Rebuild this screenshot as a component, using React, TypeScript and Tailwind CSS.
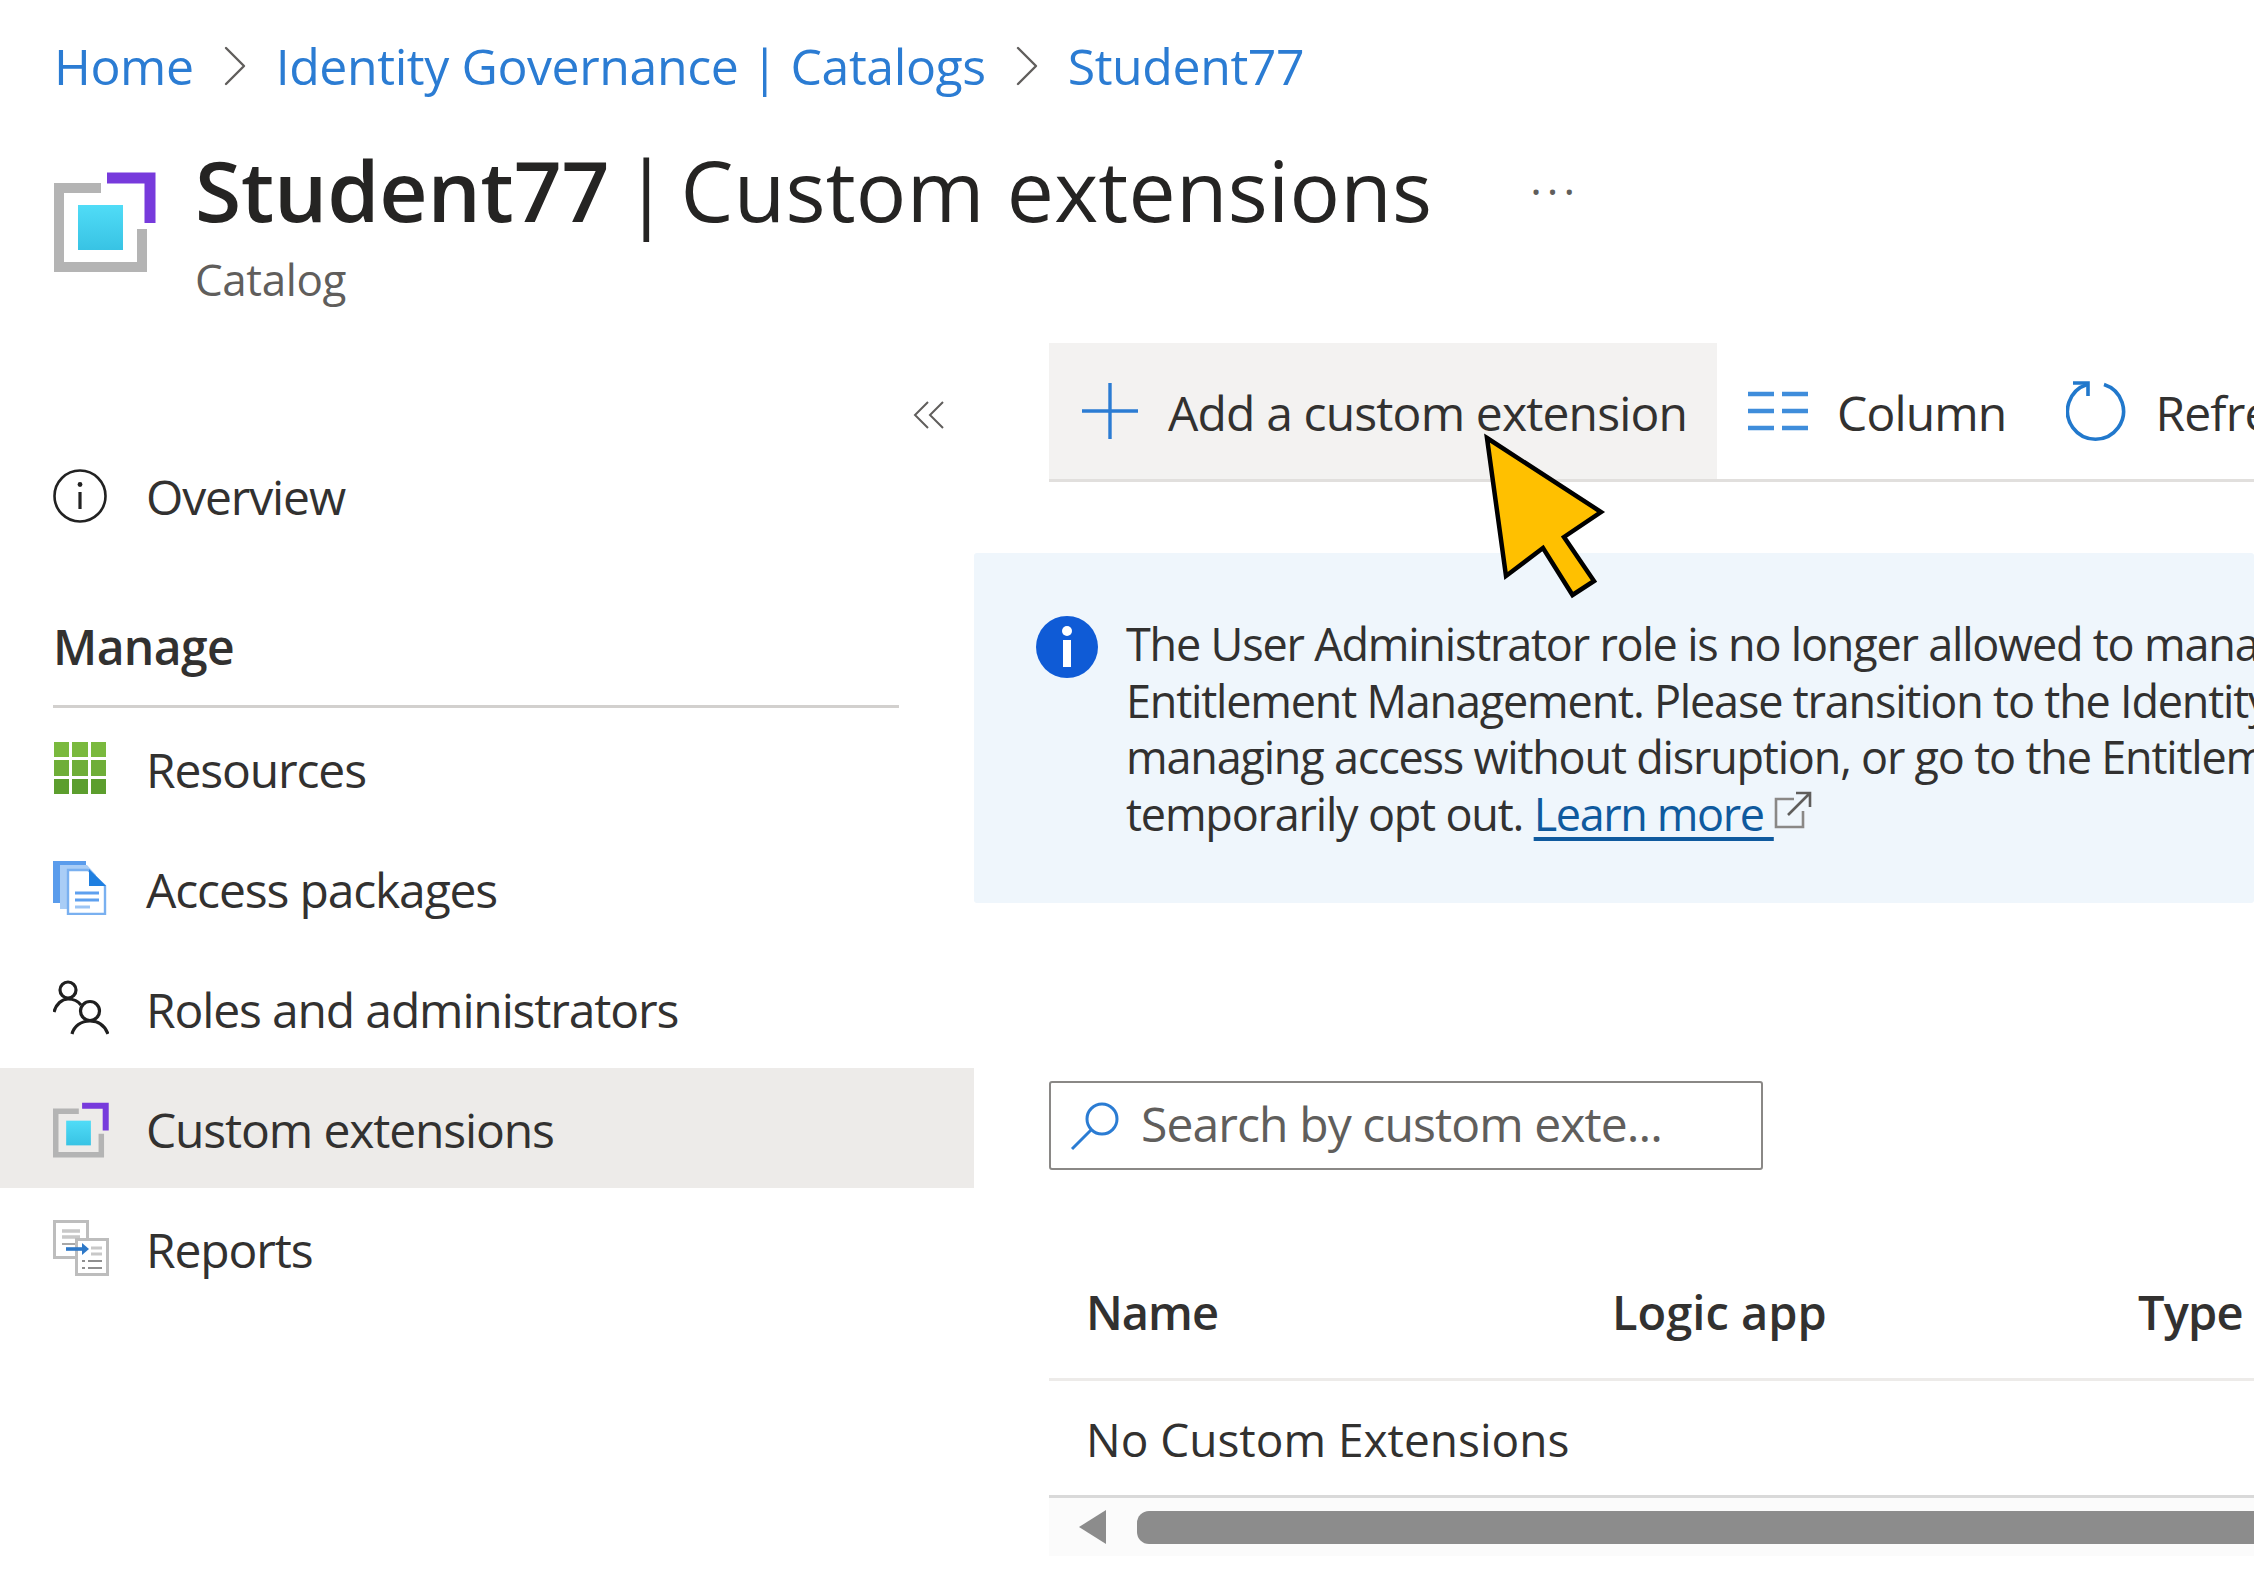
import React from 'react';
import { ChevronRight } from 'lucide-react';

const font = "font-['Open_Sans','Noto_Sans',sans-serif]";

function CatalogIcon({ className }: { className: string }) {
  return (
    <svg viewBox="0 0 102 100" className={className} fill="none">
      <defs>
        <linearGradient id="cyan" x1="0" y1="0" x2="0" y2="1">
          <stop offset="0" stopColor="#50dcf7" />
          <stop offset="1" stopColor="#38c3e4" />
        </linearGradient>
      </defs>
      <path d="M47 16H5V95H88V57" stroke="#b4b4b4" strokeWidth="10" />
      <path d="M53 6H96V51" stroke="#773adc" strokeWidth="11" />
      <rect x="24" y="33" width="45" height="45" fill="url(#cyan)" />
    </svg>
  );
}

function OverviewIcon() {
  return (
    <svg viewBox="0 0 54 54" className="w-[54px] h-[54px] mt-[2px]" fill="none" stroke="#222">
      <circle cx="27" cy="27" r="25.5" strokeWidth="2.6" />
      <circle cx="27" cy="15.5" r="2.4" fill="#222" stroke="none" />
      <path d="M27 23V40" strokeWidth="3.2" />
    </svg>
  );
}

function ResourcesIcon() {
  const cells = [0, 1, 2, 3, 4, 5, 6, 7, 8];
  return (
    <div className="w-[54px] h-[54px] grid grid-cols-3 gap-[3px] p-[1px]">
      {cells.map((c) => (
        <div key={c} className={c < 3 ? 'bg-[#7ab93e]' : c < 6 ? 'bg-[#6fae38]' : 'bg-[#5c9e2e]'} />
      ))}
    </div>
  );
}

function PackagesIcon() {
  return (
    <svg viewBox="0 0 54 54" className="w-[54px] h-[54px]">
      <path d="M0 0H33V42H0Z" fill="#5a9cec" />
      <path d="M7 4H34L43 14V48H7Z" fill="#a9cdf6" />
      <path d="M15 9H35L52 25V53H15Z" fill="#fff" stroke="#79b0f0" strokeWidth="2.4" />
      <path d="M36 8L53 25H36Z" fill="#1f7fe0" />
      <path d="M22 32H46M22 39H46" stroke="#5ea0ef" strokeWidth="3" />
      <path d="M22 46H37" stroke="#9cc5f5" strokeWidth="3" />
    </svg>
  );
}

function RolesIcon() {
  return (
    <svg viewBox="0 0 56 56" className="w-[56px] h-[56px]" fill="none" stroke="#1f1f1f" strokeWidth="3.2">
      <circle cx="15" cy="10" r="8" />
      <path d="M1 32C3 24 9 19 15 19C21 19 25 21 28 25" />
      <circle cx="37" cy="31" r="9.5" />
      <path d="M19 54C21 46 28 41 37 41C46 41 52 46 55 54" />
    </svg>
  );
}

function ReportsIcon() {
  return (
    <svg viewBox="0 0 56 56" className="w-[56px] h-[56px]">
      <rect x="1.5" y="1.5" width="33" height="36" fill="#fff" stroke="#bdbdbd" strokeWidth="3" />
      <path d="M9 11H27M9 17H27" stroke="#c8c8c8" strokeWidth="3.4" />
      <path d="M9 24H22" stroke="#a8a8a8" strokeWidth="2" />
      <rect x="23.5" y="19.5" width="31" height="35" fill="#fff" stroke="#bdbdbd" strokeWidth="3" />
      <path d="M38 28H49M38 34H49" stroke="#c8c8c8" strokeWidth="3" />
      <path d="M29 41H49M29 48H49" stroke="#8f8f8f" strokeWidth="2" strokeDasharray="3 3 16" />
      <path d="M13 29H32" stroke="#2d78c8" strokeWidth="3.6" />
      <path d="M29 23L36 29L29 35Z" fill="#2d78c8" />
    </svg>
  );
}

function NavRow({ icon, label, active }: { icon: React.ReactNode; label: string; active?: boolean }) {
  return (
    <div className={`h-[120px] flex items-center pl-[53px] ${active ? 'bg-[#edebe9]' : ''}`}>
      <div className="w-[93px] shrink-0">{icon}</div>
      <span className="text-[48px] text-[#323130] tracking-[-1.15px] leading-none pt-[3px]">{label}</span>
    </div>
  );
}

function ToolbarItem({ icon, label, className }: { icon: React.ReactNode; label: string; className: string }) {
  return (
    <div className={`h-[136px] flex items-center shrink-0 ${className}`}>
      {icon}
      <span className="text-[48px] text-[#323130] tracking-[-0.85px] leading-none whitespace-nowrap pt-[4px]">{label}</span>
    </div>
  );
}

export default function App() {
  return (
    <div className={`${font} relative w-[2254px] h-[1595px] overflow-hidden bg-white`}>
      {/* Breadcrumb */}
      <div className="h-[132px] pl-[54px] flex items-center text-[50px] text-[#2b7cd3] tracking-[-0.42px] leading-none">
        <span>Home</span>
        <ChevronRight className="w-[72px] h-[72px] mx-[5px] text-[#605e5c]" strokeWidth={0.8} />
        <span>Identity Governance | Catalogs</span>
        <ChevronRight className="w-[72px] h-[72px] mx-[5px] text-[#605e5c]" strokeWidth={0.8} />
        <span>Student77</span>
      </div>

      {/* Title */}
      <div className="h-[211px] flex pl-[54px]">
        <CatalogIcon className="w-[102px] h-[100px] mt-[40px] shrink-0" />
        <div className="ml-[39px] flex flex-col">
          <div className="flex items-center h-[116px] text-[84px] text-[#252423] leading-none whitespace-nowrap">
            <span className="font-semibold tracking-[-0.2px]">Student77</span>
            <span className="ml-[14px]">|</span>
            <span className="ml-[11px] tracking-[0.25px]">Custom extensions</span>
            <span className="ml-[98px] text-[#605e5c] text-[44px] tracking-[5px] pb-[24px]">...</span>
          </div>
          <span className="text-[44px] text-[#605e5c] tracking-[-0.4px] leading-none mt-[9px]">Catalog</span>
        </div>
      </div>

      <div className="flex">
        {/* Sidebar */}
        <div className="w-[974px] shrink-0">
          <div className="h-[92px] flex justify-end items-center pr-[29px] pt-[52px]">
            <svg viewBox="0 0 32 32" className="w-[32px] h-[32px]" fill="none" stroke="#605e5c" strokeWidth="2">
              <path d="M15 3L2 16L15 29M30 3L17 16L30 29" />
            </svg>
          </div>
          <NavRow icon={<OverviewIcon />} label="Overview" />
          <div className="mx-[53px] w-[846px] h-[153px] flex items-end pb-[34px] border-b-[3px] border-[#d2d0ce]">
            <span className="text-[48px] font-semibold text-[#323130] tracking-[-0.6px] leading-none">Manage</span>
          </div>
          <NavRow icon={<ResourcesIcon />} label="Resources" />
          <NavRow icon={<PackagesIcon />} label="Access packages" />
          <NavRow icon={<RolesIcon />} label="Roles and administrators" />
          <NavRow icon={<CatalogIcon className="w-[56px] h-[56px] mt-[3px]" />} label="Custom extensions" active />
          <NavRow icon={<ReportsIcon />} label="Reports" />
        </div>

        {/* Content */}
        <div className="flex-1 min-w-0">
          <div className="ml-[75px] flex border-b-[3px] border-[#e1dfdd] overflow-hidden">
            <ToolbarItem
              className="w-[668px] bg-[#f3f2f1] pl-[33px]"
              label="Add a custom extension"
              icon={
                <svg viewBox="0 0 56 56" className="w-[56px] h-[56px] mr-[30px]" stroke="#2b7cd3" strokeWidth="3.4">
                  <path d="M28 0V56M0 28H56" />
                </svg>
              }
            />
            <ToolbarItem
              className="pl-[31px]"
              label="Column"
              icon={
                <svg viewBox="0 0 60 40" className="w-[60px] h-[40px] mr-[29px]" stroke="#3f8ddb" strokeWidth="4.6">
                  <path d="M0 3H26M0 20H26M0 37H26M34 3H60M34 20H60M34 37H60" />
                </svg>
              }
            />
            <ToolbarItem
              className="pl-[60px]"
              label="Refresh"
              icon={
                <svg viewBox="0 0 60 60" className="w-[60px] h-[60px] mr-[29px]" fill="none" stroke="#2178cc" strokeWidth="3.6">
                  <path d="M38 3.5A28 28 0 1 1 21 3.5" />
                  <path d="M7 2H22V15" />
                </svg>
              }
            />
          </div>

          {/* Info banner */}
          <div className="mt-[71px] h-[350px] bg-[#eff6fc] rounded-[3px] flex pl-[62px] pt-[63px] overflow-hidden">
            <svg viewBox="0 0 62 62" className="w-[62px] h-[62px] shrink-0 mr-[28px]">
              <circle cx="31" cy="31" r="31" fill="#0f5bd6" />
              <circle cx="31" cy="15" r="5" fill="#fff" />
              <rect x="27" y="24" width="8" height="27" fill="#fff" />
            </svg>
            <div className="text-[45px] leading-[56.5px] text-[#323130] tracking-[-1.2px] whitespace-nowrap">
              <div>The User Administrator role is no longer allowed to manage</div>
              <div>Entitlement Management. Please transition to the Identity</div>
              <div>managing access without disruption, or go to the Entitlement</div>
              <div className="flex items-center">
                <span>temporarily opt out.&nbsp;</span>
                <span className="text-[#0f5a9e] underline underline-offset-[6px] tracking-[-1.4px]">Learn more&nbsp;</span>
                <svg viewBox="0 0 38 38" className="w-[38px] h-[38px] -mt-[8px]" fill="none" stroke="#8a8886" strokeWidth="2.6">
                  <path d="M20 8H2V36H29V20" />
                  <path d="M14 24L36 2M22 2H36V16" stroke="#605e5c" />
                </svg>
              </div>
            </div>
          </div>

          {/* Search */}
          <div className="ml-[75px] mt-[178px] w-[714px] h-[89px] border-[2.5px] border-[#8a8886] rounded-[3px] flex items-center pl-[19px]">
            <svg viewBox="0 0 50 50" className="w-[50px] h-[50px] mr-[21px]" fill="none" stroke="#2b7cd3" strokeWidth="3">
              <circle cx="32" cy="18" r="15" />
              <path d="M21 29L2 48" />
            </svg>
            <span className="text-[48px] text-[#605e5c] tracking-[-0.9px] leading-none whitespace-nowrap -mt-[3px]">Search by custom exte...</span>
          </div>

          {/* Table */}
          <div className="ml-[75px] mt-[79px]">
            <div className="h-[132px] border-b-[3px] border-[#edebe9] flex items-center pl-[37px] text-[47px] font-semibold text-[#323130] leading-none">
              <span className="w-[526px] shrink-0 -mt-[3px] tracking-[-1px]">Name</span>
              <span className="w-[526px] shrink-0 -mt-[3px]">Logic app</span>
              <span className="whitespace-nowrap -mt-[3px] tracking-[-0.8px]">Type</span>
            </div>
            <div className="h-[117px] border-b-[3px] border-[#d9d9d9] flex items-center pl-[37px] text-[46px] text-[#323130] leading-none">
              <span className="pt-[2px]">No Custom Extensions</span>
            </div>
            <div className="h-[58px] bg-[#fbfbfb] flex items-center pl-[30px]">
              <div className="w-0 h-0 border-y-[17px] border-y-transparent border-r-[27px] border-r-[#8c8c8c] shrink-0" />
              <div className="ml-[31px] flex-1 h-[33px] bg-[#8c8c8c] rounded-l-[12px]" />
            </div>
          </div>
        </div>
      </div>

      {/* Pointer annotation */}
      <svg viewBox="0 0 150 180" className="absolute left-[1470px] top-[425px] w-[150px] h-[180px]">
        <path
          d="M17 13L131 87L94 112L124 156L102.5 170L73 123L36 151Z"
          fill="#ffc000"
          stroke="#000"
          strokeWidth="4.5"
          strokeLinejoin="miter"
        />
      </svg>
    </div>
  );
}
